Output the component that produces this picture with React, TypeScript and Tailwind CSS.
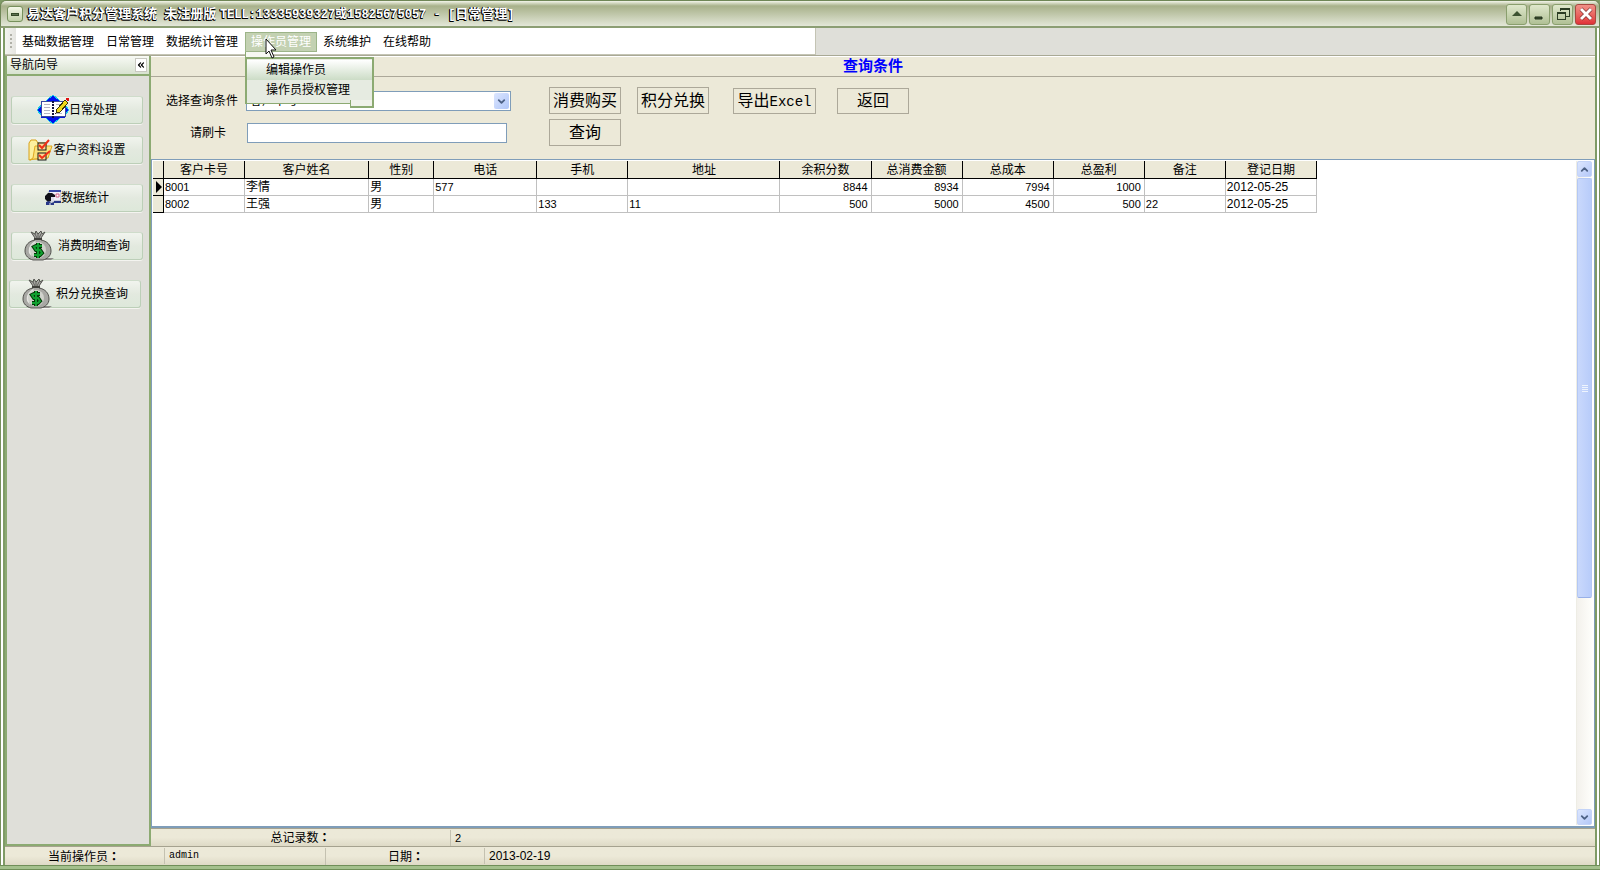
import { useState } from "react";
import { ChevronDown, ChevronUp, ChevronsLeft } from "lucide-react";

interface Customer {
  card: string;
  name: string;
  gender: string;
  phone: string;
  mobile: string;
  address: string;
  points: number;
  spent: number;
  cost: number;
  profit: number;
  remark: string;
  date: string;
}

interface Column {
  key: keyof Customer;
  title: string;
  width: string;
  align?: string;
  large?: boolean;
}

const columns: Column[] = [
  { key: "card", title: "客户卡号", width: "w-[81px]" },
  { key: "name", title: "客户姓名", width: "w-[124px]", large: true },
  { key: "gender", title: "性别", width: "w-[65px]", large: true },
  { key: "phone", title: "电话", width: "w-[103px]" },
  { key: "mobile", title: "手机", width: "w-[91px]" },
  { key: "address", title: "地址", width: "w-[152px]" },
  { key: "points", title: "余积分数", width: "w-[91px]", align: "text-right" },
  { key: "spent", title: "总消费金额", width: "w-[91px]", align: "text-right" },
  { key: "cost", title: "总成本", width: "w-[91px]", align: "text-right" },
  { key: "profit", title: "总盈利", width: "w-[91px]", align: "text-right" },
  { key: "remark", title: "备注", width: "w-[81px]" },
  { key: "date", title: "登记日期", width: "w-[91px]", large: true },
];

const customers: Customer[] = [
  { card: "8001", name: "李情", gender: "男", phone: "577", mobile: "", address: "", points: 8844, spent: 8934, cost: 7994, profit: 1000, remark: "", date: "2012-05-25" },
  { card: "8002", name: "王强", gender: "男", phone: "", mobile: "133", address: "11", points: 500, spent: 5000, cost: 4500, profit: 500, remark: "22", date: "2012-05-25" },
];

const menus = ["基础数据管理", "日常管理", "数据统计管理", "操作员管理", "系统维护", "在线帮助"];

function NotebookIcon() {
  return (
    <svg width="32" height="30" viewBox="0 0 32 30" shapeRendering="crispEdges">
      <path d="M16 0 23 6H9ZM16 29 23 23H9ZM0 15 6 8V22ZM32 15 26 8V22Z" fill="#0010f0" stroke="#18c8e8" />
      <path d="M9 6 16 1 23 6ZM9 23 16 28 23 23Z" fill="#0010f0" />
      <path d="M4 6H28V23H4Z" fill="#0818d8" />
      <path d="M4 6H14L16 7 18 6H28V21H18L16 22 14 21H4Z" fill="#fff" stroke="#3848a0" />
      <path d="M16 6V24" stroke="#101040" strokeWidth="2" strokeDasharray="2 1" />
      <path d="M7 9H13M7 12H13M7 15H13M7 18H13M19 9H24M19 18H25" stroke="#b4b4c4" />
      <path d="M19 18 20 14 28 5 31 8 23 17Z" fill="#f0d818" stroke="#3c3408" />
      <path d="M29 3H32V6H30Z" fill="#e01010" />
    </svg>
  );
}

function FolderIcon() {
  return (
    <svg width="25" height="23" viewBox="0 0 25 23">
      <path d="M1 21 1 4 3 1H8L10 4H18V20L6 20Z" fill="#fdf0a0" stroke="#d8a018" />
      <path d="M2 21 5 19 7 7H24L20 19 6 20Z" fill="#fbe27c" stroke="#e0a820" />
      <rect x="10" y="4" width="8" height="7" fill="#fcd890" stroke="#181818" />
      <rect x="10" y="14" width="8" height="7" fill="#fcd890" stroke="#181818" />
      <path d="M11 6 14 9 21 1M11 16 14 19 22 12" fill="none" stroke="#f03018" strokeWidth="2" />
    </svg>
  );
}

function ReportIcon() {
  return (
    <svg width="16" height="16" viewBox="0 0 16 16">
      <path d="M4 1H16V11H4Z" fill="#f0f0f8" stroke="#a0a8c0" />
      <path d="M4 0H16V2H4Z" fill="#3848a8" />
      <path d="M11 4H14V7H11Z" fill="#fff" stroke="#d06088" />
      <path d="M0 6 3 3H7L10 5V7L7 7 6 11 3 12 0 9Z" fill="#101018" />
      <path d="M6 7H9V11L6 12Z" fill="#dcdcec" />
      <path d="M1 15V12L4 11 6 13 9 12V15Z" fill="#283888" />
      <path d="M9 12H16" stroke="#283888" strokeWidth="2" />
      <path d="M4 14H6" stroke="#e8e8f0" />
    </svg>
  );
}

function MoneyBagIcon() {
  return (
    <svg width="30" height="30" viewBox="0 0 30 30">
      <path d="M19 27H30L27 29H12Z" fill="#8c8c88" />
      <path d="M7 1 11 3 12 0 14 3 17 0 18 3 21 1 17 7V9C23 10 27 14 27 20 27 25 23 28 19 29H9C5 28 1 25 1 20 1 14 5 10 11 9V7Z" fill="#a8a8a4" stroke="#50504c" />
      <path d="M11 10C6 13 4 17 5 22L8 26C6 20 8 14 12 11Z" fill="#e4e4e0" />
      <path d="M10 8H18" stroke="#40403c" strokeWidth="2" />
      <path d="M11 3 13 7M17 3 15 7M14 3V7" stroke="#60605c" />
      <ellipse cx="14" cy="19" rx="8" ry="8" fill="#d0d2cc" />
      <path d="M18 15H12L10 16 12 19H16L18 22 16 24H10M14 12V27" fill="none" stroke="#043808" strokeWidth="4" />
      <path d="M18 15H12L10 16 12 19H16L18 22 16 24H10M14 12V27" fill="none" stroke="#10a030" strokeWidth="2" />
    </svg>
  );
}

function CursorIcon() {
  return (
    <svg className="pointer-events-none absolute left-5 top-2.5 z-30" width="13" height="21" viewBox="0 0 13 21">
      <path d="M1 1V16L4 13 7 20 9 19 6 12H11Z" fill="#fff" stroke="#101010" />
    </svg>
  );
}

const navItems = [
  { label: "日常处理", icon: <NotebookIcon />, space: "ml-1 mt-5" },
  { label: "客户资料设置", icon: <FolderIcon />, space: "ml-1 mt-3" },
  { label: "数据统计", icon: <ReportIcon />, space: "ml-1 mt-5" },
  { label: "消费明细查询", icon: <MoneyBagIcon />, space: "ml-1 mt-5", gap: "gap-1" },
  { label: "积分兑换查询", icon: <MoneyBagIcon />, space: "ml-0.5 mt-5", gap: "gap-1" },
];

function TitleBar() {
  const button = "flex h-[21px] w-[21px] items-center justify-center rounded-[3px] border";
  const green = "border-[#8a9f6e] bg-linear-to-b from-[#dfe8cc] to-[#b0c095]";
  return (
    <header className="flex h-7 items-center justify-between rounded-t-md border border-b-2 border-[#6f8656] border-b-[#8c9e74] bg-linear-to-b from-[#f3f5ea] via-[#a8b18a] via-20% to-[#e3e7d8] pt-px pl-1.5 pr-[3px]">
      <div className="flex items-center">
        <button aria-label="系统菜单" className="flex h-4 w-4 items-center justify-center rounded-[3px] border border-[#76905c] bg-linear-to-b from-[#f4f8e8] to-[#c0d0a8]">
          <span className="h-[3px] w-2 border border-[#344a28] bg-[#5d7350]" />
        </button>
        <h1 className="ml-1 whitespace-pre pt-px text-[13px] leading-5 font-bold text-white [text-shadow:-1px_0_#000,0_1px_#000,-1px_1px_#000]">
          易达客户积分管理系统{"  "}未注册版{" "}
          <span className="font-['Liberation_Mono','Noto_Sans_CJK_SC',monospace] text-[12px]">TELL:13335939327或15825675057 - [</span>
          日常管理
          <span className="font-['Liberation_Mono',monospace] text-[12px]">]</span>
        </h1>
      </div>
      <div className="flex gap-0.5">
        <button aria-label="卷起" className={`${button} ${green}`}>
          <svg width="12" height="6" viewBox="0 0 12 6"><path d="M1 5 6 0 11 5Z" fill="#3d5331" /></svg>
        </button>
        <button aria-label="最小化" className={`${button} ${green}`}>
          <svg width="12" height="12" viewBox="0 0 12 12"><path d="M1 9H8V11H1Z" fill="#3d5331" stroke="#20301a" /></svg>
        </button>
        <button aria-label="还原" className={`${button} ${green}`}>
          <svg width="14" height="14" viewBox="0 0 14 14" fill="none" stroke="#2c3d24" shapeRendering="crispEdges">
            <path d="M5 2H13M1 6H10" strokeWidth="2" />
            <path d="M4 4V1H13V9H10M1 6H9V12H1Z" />
          </svg>
        </button>
        <button aria-label="关闭" className={`${button} border-[#a84840] bg-linear-to-b from-[#f09088] to-[#e03038]`}>
          <svg width="14" height="14" viewBox="0 0 14 14"><path d="M2 2 12 12M12 2 2 12" stroke="#702020" strokeWidth="4" /><path d="M2 2 12 12M12 2 2 12" stroke="#fff" strokeWidth="3" /></svg>
        </button>
      </div>
    </header>
  );
}

function MenuBar() {
  return (
    <div className="flex h-7 border-b border-[#a9a995] bg-[#dfdfd9]">
      <nav className="flex w-[51%] min-w-[540px] border-r border-b border-[#c4c4b4] bg-white">
        <div className="flex w-[11px] flex-col items-center justify-center gap-0.5 bg-linear-to-r from-[#f4f4f0] to-[#e4e4e0]">
          {[0, 1, 2, 3].map((dot) => (
            <span key={dot} className="h-0.5 w-0.5 bg-[#b0b0a8]" />
          ))}
        </div>
        {menus.map((menu) =>
          menu === "操作员管理" ? (
            <div key={menu} className="relative ml-px pt-1">
              <button className="h-5 border border-[#9cb488] bg-[#c3d1b2] px-[5px] leading-4 text-white">{menu}</button>
              <CursorIcon />
              <Dropdown />
            </div>
          ) : (
            <button key={menu} className="mt-1 h-5 px-1.5 leading-4">{menu}</button>
          )
        )}
      </nav>
    </div>
  );
}

function Dropdown() {
  return (
    <div className="absolute top-6 left-0 z-20 w-[129px]">
      <div className="h-[5px] w-7 border-l border-[#8caa72] bg-[#f6f8f2]" />
      <ul className="border-2 border-b-0 border-[#8caa72] bg-[#e6ebe1] pt-px">
        <li>
          <button className="block h-5 w-full bg-linear-to-b from-white to-[#ccdcc6] pl-[19px] text-left leading-5">编辑操作员</button>
        </li>
        <li>
          <button className="block h-5 w-full pl-[19px] text-left leading-5">操作员授权管理</button>
        </li>
      </ul>
      <div className="flex">
        <div className="h-1 flex-1 border-b border-l-2 border-[#8caa72] bg-[#e6ebe1]" />
        <div className="h-2 w-6 border-r-2 border-b-2 border-l border-[#8caa72] bg-[#f0f2ea]" />
      </div>
    </div>
  );
}

function Sidebar() {
  return (
    <aside className="w-[146px] shrink-0 border-x-2 border-b-2 border-[#8caa72] bg-[#dfdfd9]">
      <div className="flex h-5 items-center justify-between border-b-2 border-[#8caa72] bg-linear-to-b from-[#f8faf5] to-[#d8e2d0] pr-0.5 pl-[3px]">
        <span>导航向导</span>
        <button aria-label="收起" className="flex h-3.5 w-3 items-center justify-center border border-[#c8c8c0] bg-white">
          <ChevronsLeft size={12} strokeWidth={3} />
        </button>
      </div>
      {navItems.map((item) => (
        <button
          key={item.label}
          className={`flex h-7 w-[132px] items-center justify-center rounded-[3px] border border-[#bccfb8] border-t-[#cfdccb] bg-linear-to-b from-[#f1f4ee] via-[#e3e9df] to-[#dde8da] shadow-[0_1px_#f4f4f0] ${item.gap ?? ""} ${item.space}`}
        >
          {item.icon}
          {item.label}
        </button>
      ))}
    </aside>
  );
}

function QueryForm() {
  const [field, setField] = useState("客户卡号");
  const [card, setCard] = useState("");
  const button = "border border-[#aca899] text-[16px] leading-5 whitespace-nowrap";
  return (
    <form className="flex h-[83px] items-start border-t border-[#aca899] bg-[#ece9d8]" onSubmit={(e) => e.preventDefault()}>
      <div className="ml-[15px] grid grid-cols-[72px_265px] items-center gap-x-2 gap-y-3 pt-3.5">
        <label htmlFor="field">选择查询条件</label>
        <div className="relative h-5">
          <select
            id="field"
            value={field}
            onChange={(e) => setField(e.target.value)}
            className="h-5 w-full appearance-none border border-[#7f9db9] bg-white pl-[3px] leading-4"
          >
            <option>客户卡号</option>
            <option>客户姓名</option>
          </select>
          <span className="pointer-events-none absolute top-0.5 right-0.5 flex h-4 w-[15px] items-center justify-center rounded-xs bg-linear-to-br from-[#dce6fe] to-[#b0c6f8] text-[#4d6185]">
            <ChevronDown size={11} strokeWidth={4} />
          </span>
        </div>
        <label htmlFor="card" className="pl-3 text-center">请刷卡</label>
        <input
          id="card"
          value={card}
          onChange={(e) => setCard(e.target.value)}
          className="ml-px h-5 w-[260px] border border-[#7f9db9] bg-white px-1"
        />
      </div>
      <div className="ml-[38px] grid grid-cols-[72px_72px_83px_72px] items-end gap-y-[5px] pt-2.5">
        <button className={`${button} h-[27px] w-[72px]`}>消费购买</button>
        <button className={`${button} ml-4 h-[27px] w-[72px]`}>积分兑换</button>
        <button className={`${button} ml-10 h-[26px] w-[83px]`}>
          导出<span className="font-['Liberation_Mono',monospace] text-[14px]">Excel</span>
        </button>
        <button className={`${button} ml-[61px] h-[26px] w-[72px]`}>返回</button>
        <button type="submit" className={`${button} h-[27px] w-[72px]`}>查询</button>
      </div>
    </form>
  );
}

function CustomerTable() {
  return (
    <div className="min-w-0 flex-1 overflow-hidden">
      <table className="w-[1164px] table-fixed border-separate border-spacing-0">
        <thead>
          <tr className="h-[18px] bg-[#ece9d8]">
            <th className="w-[11px] border-r border-b border-black" />
            {columns.map((col) => (
              <th key={col.key} className={`${col.width} border-r border-b border-black p-0 text-center leading-4 font-normal`}>
                {col.title}
              </th>
            ))}
          </tr>
        </thead>
        <tbody>
          {customers.map((row, i) => (
            <tr key={row.card} className="h-[17px]">
              <td className="border-r border-b border-black bg-[#ece9d8] p-0">
                {i === 0 && (
                  <svg className="ml-[3px]" width="6" height="12" viewBox="0 0 6 12"><path d="M0 0 6 6 0 12Z" /></svg>
                )}
              </td>
              {columns.map((col) => (
                <td
                  key={col.key}
                  className={`border-r border-b border-[#c0c0c0] py-0 pr-[3px] pl-px leading-4 ${col.large ? "text-[12px]" : "text-[11px]"} ${col.align ?? ""}`}
                >
                  {row[col.key]}
                </td>
              ))}
            </tr>
          ))}
        </tbody>
      </table>
    </div>
  );
}

function ScrollBar() {
  const button = "flex h-4 shrink-0 items-center justify-center rounded-xs border border-[#c4d4f8] bg-linear-to-br from-[#dce6fe] to-[#b4c8f8] text-[#4d6185]";
  return (
    <div className="mr-px flex w-4 flex-col border-l border-[#eeede5] bg-linear-to-r from-[#f3f1ec] to-[#fefefb]">
      <button aria-label="向上滚动" className={button}>
        <ChevronUp size={11} strokeWidth={4} />
      </button>
      <div className="flex-1 py-px">
        <div className="flex h-2/3 flex-col items-center justify-center gap-px rounded-xs border border-[#b4c8f4] border-b-[#98b0e8] bg-linear-to-r from-[#c9d8fc] to-[#b8ccfa]">
          {[0, 1, 2, 3].map((line) => (
            <span key={line} className="h-px w-1.5 bg-[#eef4fe]" />
          ))}
        </div>
      </div>
      <button aria-label="向下滚动" className={button}>
        <ChevronDown size={11} strokeWidth={4} />
      </button>
    </div>
  );
}

// the TC face centres the full-width colon in its box
function Colon() {
  return <span className="font-['Noto_Sans_CJK_TC',sans-serif] font-bold">：</span>;
}

export default function App() {
  const bar = "flex shrink-0 items-center border-t border-[#a5a28f] bg-linear-to-b from-[#ece9d8] via-[#ece9d8] to-[#dedac6]";
  return (
    <div className="flex min-h-screen flex-col bg-[#7f9b66] font-['Liberation_Sans','Noto_Sans_CJK_SC',sans-serif] text-[12px] leading-4 text-black">
      <TitleBar />
      <div className="flex flex-1 flex-col border-x border-[#76905c] bg-white px-0.5">
        <div className="flex flex-1 flex-col border-x-2 border-[#7f9b66]">
          <MenuBar />
          <div className="flex flex-1">
            <Sidebar />
            <main className="flex min-w-0 flex-1 flex-col bg-[#ece9d8]">
              <h2 className="h-5 border-t border-white text-center text-[15px] leading-[18px] font-bold text-[#0000ff]">查询条件</h2>
              <QueryForm />
              <section className="flex flex-1 border border-b-2 border-[#7f9db9] bg-white p-px">
                <CustomerTable />
                <ScrollBar />
              </section>
              <div className={`${bar} h-[18px]`}>
                <span className="w-[299px] text-center">总记录数<Colon /></span>
                <span className="border-l border-[#c4c1b0] pl-1 text-[11px]">{customers.length}</span>
              </div>
            </main>
          </div>
          <footer className={`${bar} h-[19px]`}>
            <span className="w-[159px] pl-[43px]">当前操作员<Colon /></span>
            <span className="w-[161px] border-l border-[#c4c1b0] pl-1 font-['Liberation_Mono',monospace] text-[10px]">admin</span>
            <span className="w-[159px] border-l border-[#c4c1b0] pl-[62px]">日期<Colon /></span>
            <span className="border-l border-[#c4c1b0] pl-1">2013-02-19</span>
          </footer>
        </div>
      </div>
      <div className="h-[5px] border-y border-[#6f8e58] bg-[#a3c08c]" />
    </div>
  );
}
